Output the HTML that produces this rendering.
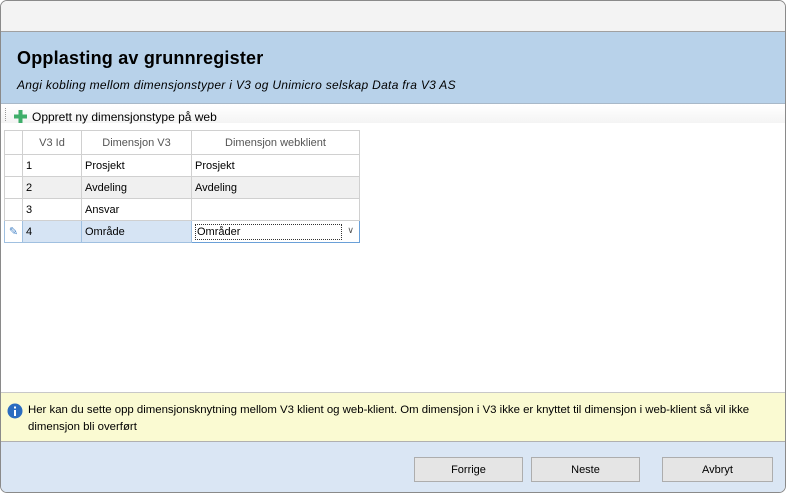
<!DOCTYPE html><html><head><meta charset="utf-8"><style>
*{box-sizing:border-box;margin:0;padding:0}
body{width:786px;height:493px;overflow:hidden;background:#fff;font-family:"Liberation Sans",sans-serif;font-size:11px;color:#000;position:relative}
.win{position:absolute;left:0;top:0;width:786px;height:493px;border:1px solid #8a8a8a;border-radius:7px;overflow:hidden;background:#fff}
.tb{position:absolute;left:0;top:0;width:786px;height:31px;background:#f3f3f3;border-bottom:1px solid #a0a0a0}
.hd{position:absolute;left:0;top:31px;width:786px;height:72px;background:#b8d2ea;border-bottom:1px solid #a8b8c8}
.hd h1{position:absolute;left:16px;top:16px;font-size:18px;font-weight:bold;letter-spacing:0.2px}
.hd p{position:absolute;left:16px;top:46px;font-size:12px;font-style:italic;letter-spacing:0.3px}
.tool{position:absolute;left:0;top:104px;width:786px;height:18px;background:#fff}
.tool .bar{position:absolute;left:0;top:0;width:786px;height:18px;background:linear-gradient(#fff,#f4f4f4)}
.tool span{position:absolute;left:31px;top:5px;font-size:12px}
table{position:absolute;left:3px;top:129px;border-collapse:collapse;font-size:11px}
td{height:22px;border:1px solid #d0d0d0;padding:0 3px;white-space:nowrap}
th{height:24px;font-weight:normal;color:#555;border:1px solid #d0d0d0;text-align:center}
.info{position:absolute;left:0;top:391px;width:786px;height:50px;background:#fafad2;border-top:1px solid #c8c8c8;border-bottom:1px solid #b0b0b0}
.info p{position:absolute;left:27px;top:9px;width:755px;line-height:17px;font-size:11.4px}
.ft{position:absolute;left:0;top:441px;width:786px;height:52px;background:#dae6f4}
.btn{position:absolute;top:15px;height:25px;background:#e5e5e5;border:1px solid #adadad;text-align:center;line-height:24px;font-size:11px}
</style></head><body><div class="win">
<div class="tb"></div>
<div class="hd"><h1>Opplasting av grunnregister</h1><p>Angi kobling mellom dimensjonstyper i V3 og Unimicro selskap Data fra V3 AS</p></div>
<div class="tool"><div class="bar"></div>
<div style="position:absolute;left:4px;top:3px;width:1px;height:13px;border-left:1px dotted #999"></div>
<svg style="position:absolute;left:13px;top:5px" width="13" height="13"><rect x="4.5" y="0" width="4" height="13" fill="#3fae6a"/><rect x="0" y="4.5" width="13" height="4" fill="#3fae6a"/></svg>
<span>Opprett ny dimensjonstype på web</span></div>
<table>
<tr><th style="width:18px"></th><th style="width:59px">V3 Id</th><th style="width:110px">Dimensjon V3</th><th style="width:168px">Dimensjon webklient</th></tr>
<tr><td></td><td>1</td><td>Prosjekt</td><td>Prosjekt</td></tr>
<tr style="background:#f0f0f0"><td style="background:#fff"></td><td>2</td><td>Avdeling</td><td>Avdeling</td></tr>
<tr><td style="height:21px"></td><td>3</td><td>Ansvar</td><td></td></tr>
<tr style="background:#d6e4f4"><td style="background:#fff;color:#4a86c8;text-align:center;border-color:#a0c0e0;height:21px">✎</td><td style="border-color:#a0c0e0">4</td><td style="border-color:#a0c0e0">Område</td><td style="background:#fff;border-color:#6aa0d8;position:relative"><span style="border:1px dotted #333;display:inline-block;width:147px;padding-left:1px;height:16px;line-height:14px">Områder</span><span style="position:absolute;right:5px;top:4px;color:#555;font-size:9px">&#8744;</span></td></tr>
</table>
<div class="info">
<svg style="position:absolute;left:6px;top:10px" width="16" height="16"><circle cx="8" cy="8" r="7.5" fill="#2a6cc0"/><rect x="7" y="7" width="2" height="6" fill="#fff"/><rect x="7" y="3.5" width="2" height="2" fill="#fff"/></svg>
<p>Her kan du sette opp dimensjonsknytning mellom V3 klient og web-klient. Om dimensjon i V3 ikke er knyttet til dimensjon i web-klient så vil ikke dimensjon bli overført</p></div>
<div class="ft">
<div class="btn" style="left:413px;width:109px">Forrige</div>
<div class="btn" style="left:530px;width:109px">Neste</div>
<div class="btn" style="left:661px;width:111px">Avbryt</div>
</div>
</div></body></html>
